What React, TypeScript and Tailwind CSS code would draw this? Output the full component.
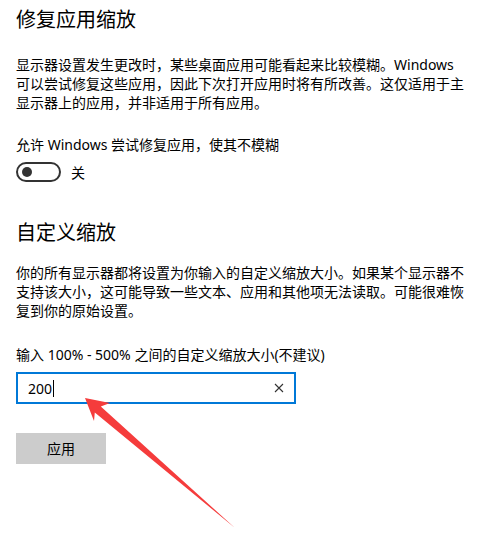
const font = { fontFamily: '"Noto Sans", "Noto Sans CJK SC", sans-serif' };

const Arrow = () => (
  <svg className="pointer-events-none absolute left-0 top-0" width="478" height="548" viewBox="0 0 478 548">
    <polygon
      points="85,398 110,403 100.8,406.4 235,528 94.8,412.6 94,421"
      fill="#f53c3c"
    />
  </svg>
);

export default function App() {
  return (
    <div className="relative h-[548px] w-[478px] overflow-hidden bg-white text-black" style={font}>
      <div className="flex flex-col items-start pl-4 pt-[6px]">
        <h1 className="text-[20px] font-normal leading-[28px]">修复应用缩放</h1>
        <p className="mt-[21px] whitespace-nowrap text-[14px] leading-[19px]">
          显示器设置发生更改时，某些桌面应用可能看起来比较模糊。Windows
          <br />
          可以尝试修复这些应用，因此下次打开应用时将有所改善。这仅适用于主
          <br />
          显示器上的应用，并非适用于所有应用。
        </p>
        <div className="mt-[23px] text-[14px] leading-[19px]">允许 Windows 尝试修复应用，使其不模糊</div>
        <div className="mt-[8px] flex items-center gap-[10px]">
          <div className="flex h-[20px] w-[45px] items-center rounded-full border-2 border-[#333] pl-[4px]">
            <div className="h-[10px] w-[10px] rounded-full bg-[#333]" />
          </div>
          <span className="text-[14px] leading-[19px]">关</span>
        </div>

        <h2 className="mt-[37px] text-[20px] font-normal leading-[28px]">自定义缩放</h2>
        <p className="mt-[16px] whitespace-nowrap text-[14px] leading-[19px]">
          你的所有显示器都将设置为你输入的自定义缩放大小。如果某个显示器不
          <br />
          支持该大小，这可能导致一些文本、应用和其他项无法读取。可能很难恢
          <br />
          复到你的原始设置。
        </p>
        <div className="mt-[25px] text-[14px] leading-[19px]">输入 100% - 500% 之间的自定义缩放大小(不建议)</div>
        <div className="mt-[8px] flex h-[32px] w-[280px] items-center border-2 border-[#0078d7] pl-[10px] pr-[10px]">
          <span className="text-[14px] leading-[19px]">200</span>
          <span className="ml-[1px] h-[17px] w-px bg-black" />
          <svg className="ml-auto" width="10" height="10" viewBox="0 0 10 10">
            <path d="M1 1L9 9M9 1L1 9" stroke="#333" strokeWidth="1.1" fill="none" />
          </svg>
        </div>
        <button className="mt-[29px] flex h-[31px] w-[90px] items-center justify-center bg-[#cccccc] text-[14px] leading-[19px]">
          应用
        </button>
      </div>
      <Arrow />
    </div>
  );
}
